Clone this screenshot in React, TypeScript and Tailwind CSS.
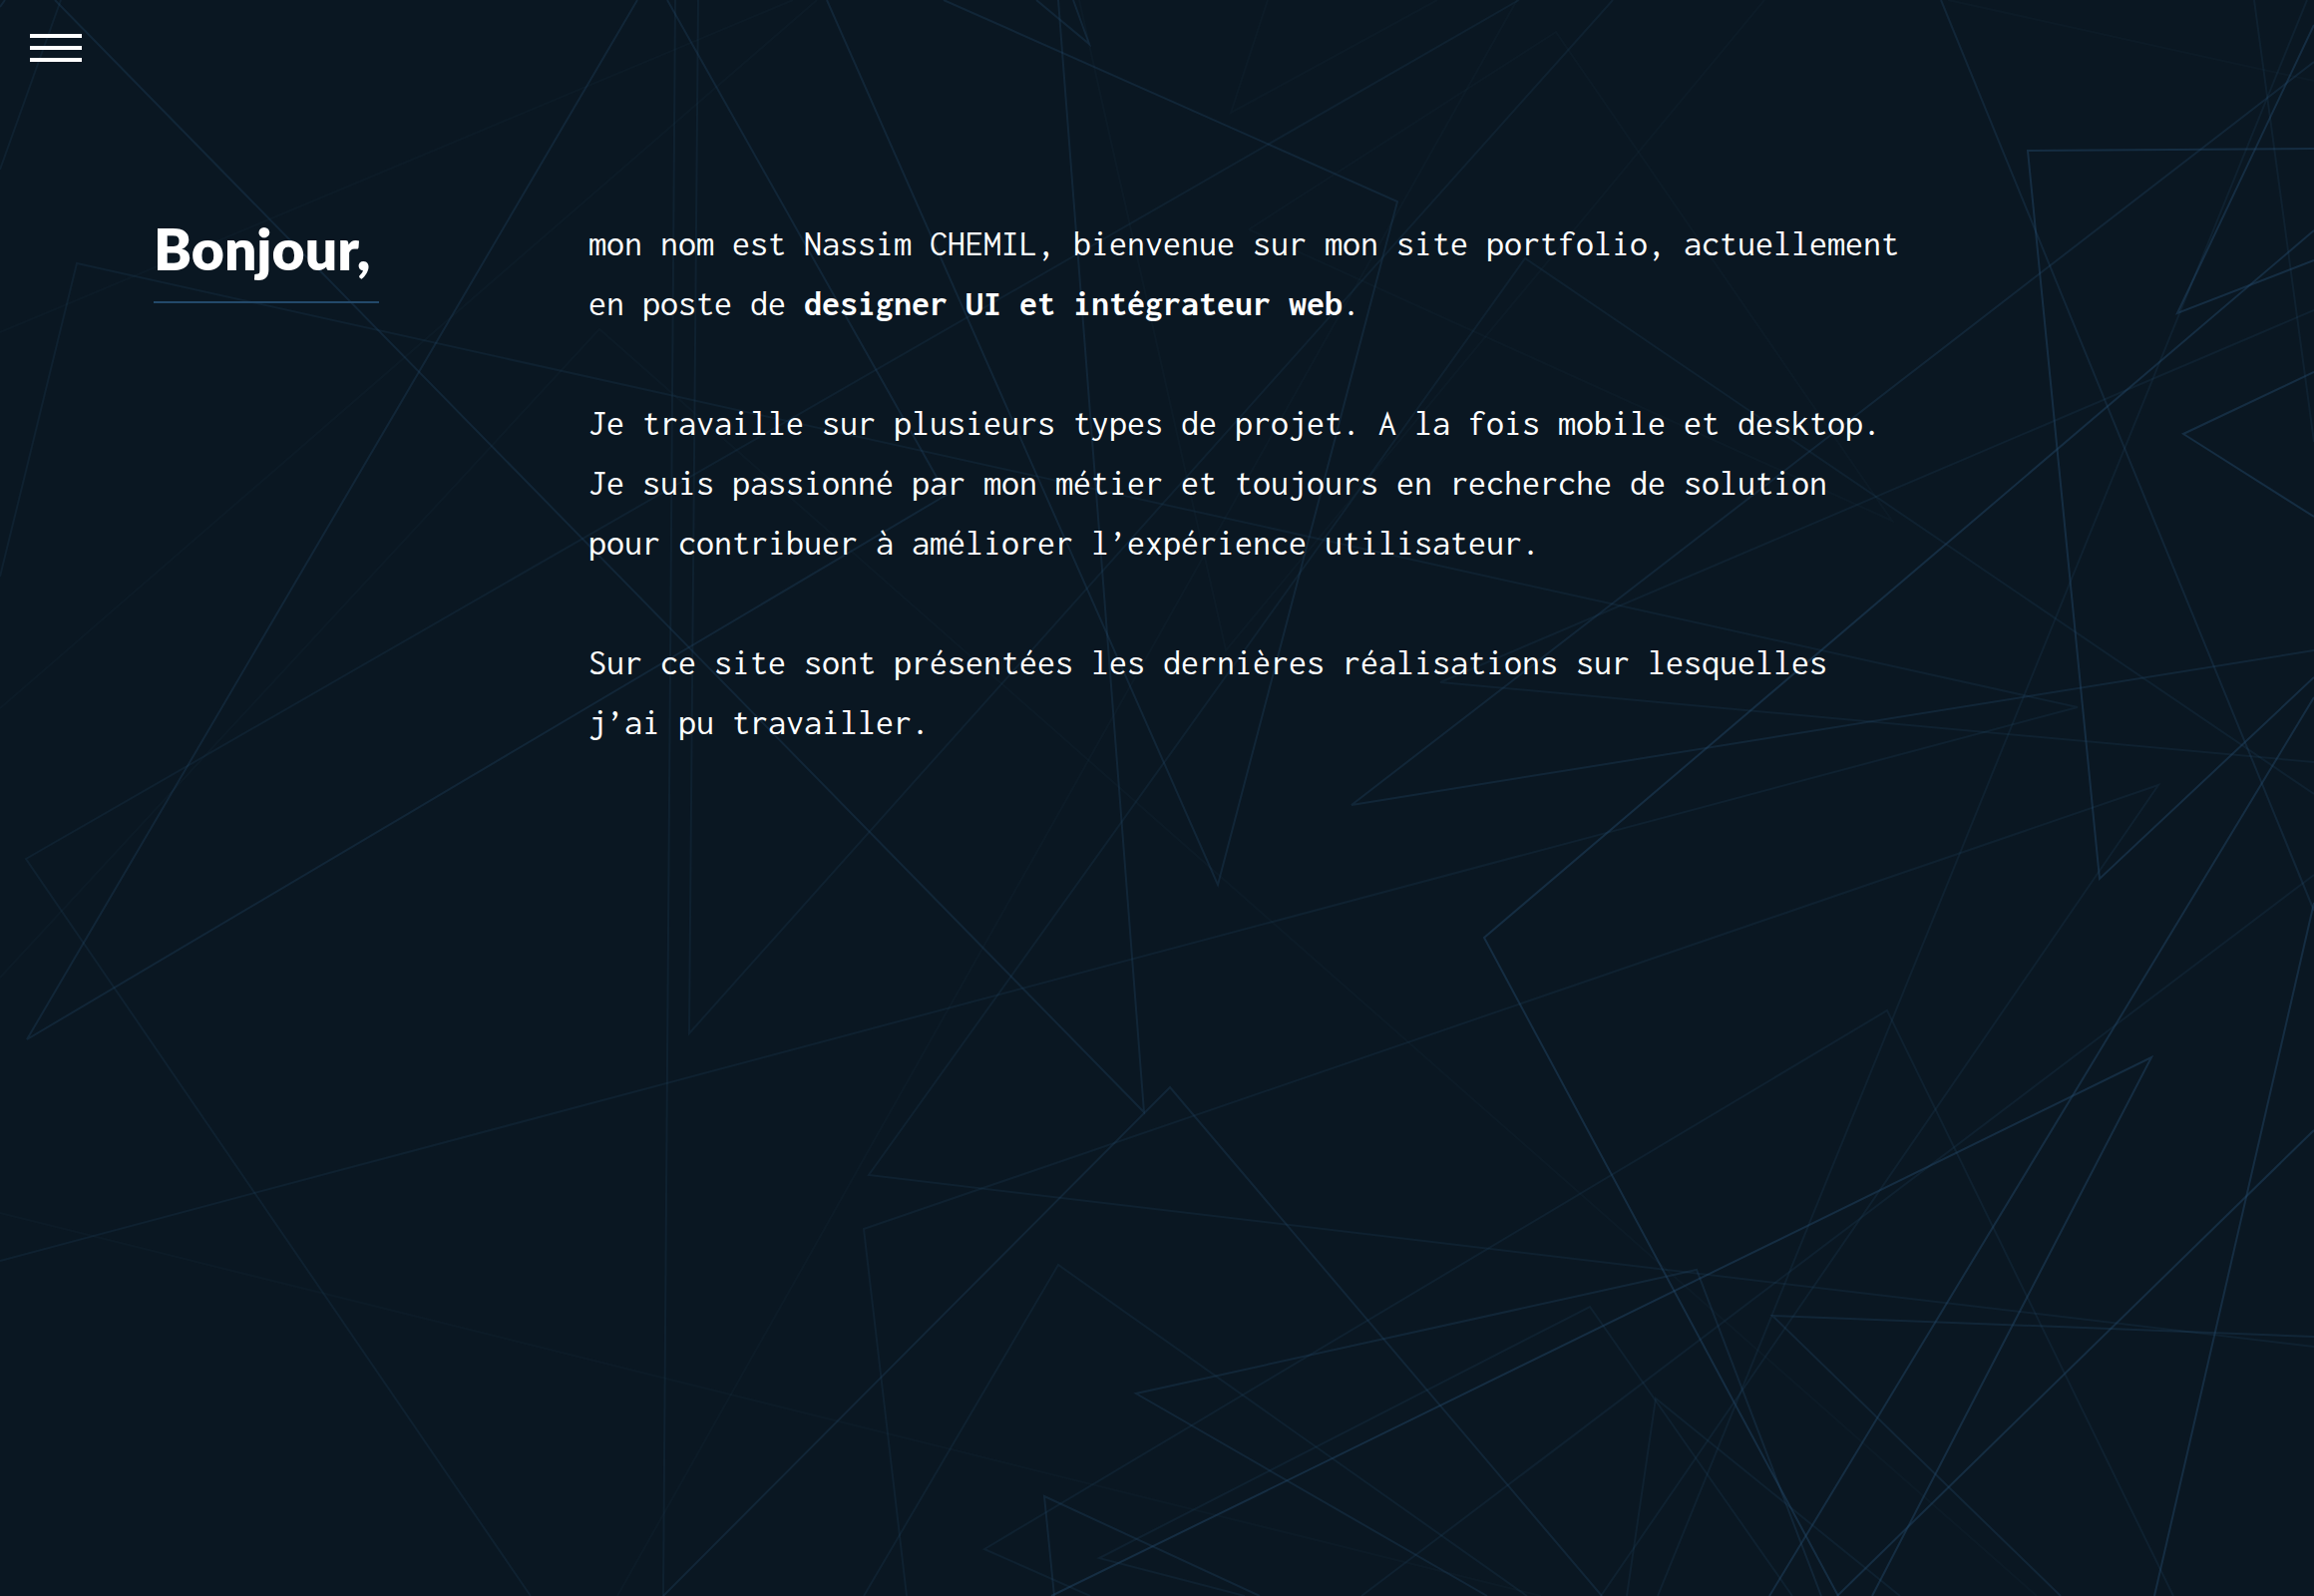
type Tone = "faint" | "soft" | "medium" | "strong";

const toneClass: Record<Tone, string> = {
  faint: "stroke-[#23495a]/10",
  soft: "stroke-[#23496a]/20",
  medium: "stroke-[#23496a]/30",
  strong: "stroke-[#23496a]/45",
};

const lines: [Tone, string][] = [
  ["faint", "0,333 795,0"],
  ["faint", "819,0 0,710"],
  ["faint", "0,980 601,330 2042,1600"],
  ["faint", "0,1216 1545,1600"],
  ["faint", "619,1600 1521,0"],
  ["faint", "1082,0 1229,652 1769,0"],
  ["faint", "1271,0 1234,113 1441,0"],
  ["faint", "1252,230 1560,32 1897,522 1252,230"],
  ["faint", "1953,0 2320,81"],
  ["soft", "61,0 0,170"],
  ["soft", "0,578 77,264 2083,709 0,1264"],
  ["soft", "677,0 665,1600"],
  ["soft", "700,0 691,1036 1617,0"],
  ["soft", "1523,0 26,861 532,1600"],
  ["soft", "2320,1350 871,1178 1529,259 2320,796"],
  ["soft", "2260,0 2320,443"],
  ["soft", "2313,0 1662,1600"],
  ["soft", "2320,311 1444,684 2320,764"],
  ["soft", "909,1600 866,1232 2164,787 1605,1600"],
  ["soft", "2320,877 1365,1600"],
  ["soft", "1093,1600 987,1553 1892,1013 2179,1600"],
  ["soft", "1248,1600 1102,1562 1594,1310 1797,1600"],
  ["soft", "1631,1600 1660,1402 1905,1600"],
  ["soft", "866,1600 1061,1268 1531,1600"],
  ["medium", "5,0 0,7"],
  ["medium", "55,0 1147,1115 1061,0"],
  ["medium", "639,0 27,1042 949,496 669,0"],
  ["medium", "829,0 1221,887 1401,202 946,0"],
  ["medium", "1039,0 1092,44 1076,0"],
  ["medium", "1946,0 2320,913"],
  ["medium", "2320,62 1355,807 2320,652"],
  ["medium", "2320,1340 1777,1319 2066,1600"],
  ["medium", "1826,1600 1701,1273 1139,1397 1491,1600"],
  ["medium", "665,1600 1173,1090 1606,1600"],
  ["medium", "1057,1600 1047,1500 1263,1600"],
  ["strong", "2320,25 2183,314 2320,261"],
  ["strong", "2320,149 2033,151 2105,881 2320,679"],
  ["strong", "2320,231 1488,940 1843,1600"],
  ["strong", "2320,373 2189,435 2320,518"],
  ["strong", "2320,699 1774,1600"],
  ["strong", "1054,1600 2157,1060 1877,1600"],
  ["strong", "2320,905 2160,1600"],
  ["strong", "2320,1133 1842,1600"],
];

function Backdrop() {
  return (
    <svg
      className="pointer-events-none absolute inset-0 h-full w-full"
      viewBox="0 0 2320 1600"
      preserveAspectRatio="xMidYMid slice"
      fill="none"
      strokeWidth="2"
      aria-hidden="true"
    >
      {lines.map(([tone, points]) => (
        <polyline key={points} className={toneClass[tone]} points={points} />
      ))}
    </svg>
  );
}

function MenuButton() {
  return (
    <button type="button" aria-label="Menu" className="flex w-[52px] cursor-pointer flex-col gap-2">
      <span className="h-1 w-full bg-white" />
      <span className="h-1 w-full bg-white" />
      <span className="h-1 w-full bg-white" />
    </button>
  );
}

export default function App() {
  return (
    <div className="relative min-h-screen overflow-hidden bg-[#0a1722] text-white">
      <Backdrop />
      <header className="relative flex px-[30px] pt-[34px]">
        <MenuButton />
      </header>
      <main className="relative flex flex-wrap px-[154px] pt-[152px] pb-20">
        <div className="w-[436px] pt-1">
          <h1 className="w-[226px] border-b-2 border-[#23496a] pb-[22px] font-['Lato',sans-serif] text-[57px] leading-[62px] font-extrabold">
            Bonjour,
          </h1>
        </div>
        <div className="flex max-w-[1328px] flex-1 flex-col gap-[60px] font-['Inconsolata',monospace] text-[36px] leading-[60px]">
          <p>
            mon nom est Nassim CHEMIL, bienvenue sur mon site portfolio, actuellement en poste de{" "}
            <strong className="font-bold">designer UI et intégrateur web</strong>.
          </p>
          <p>
            Je travaille sur plusieurs types de projet. A la fois mobile et desktop. Je suis passionné par mon métier
            et toujours en recherche de solution pour contribuer à améliorer l’expérience utilisateur.
          </p>
          <p>Sur ce site sont présentées les dernières réalisations sur lesquelles j’ai pu travailler.</p>
        </div>
      </main>
    </div>
  );
}
